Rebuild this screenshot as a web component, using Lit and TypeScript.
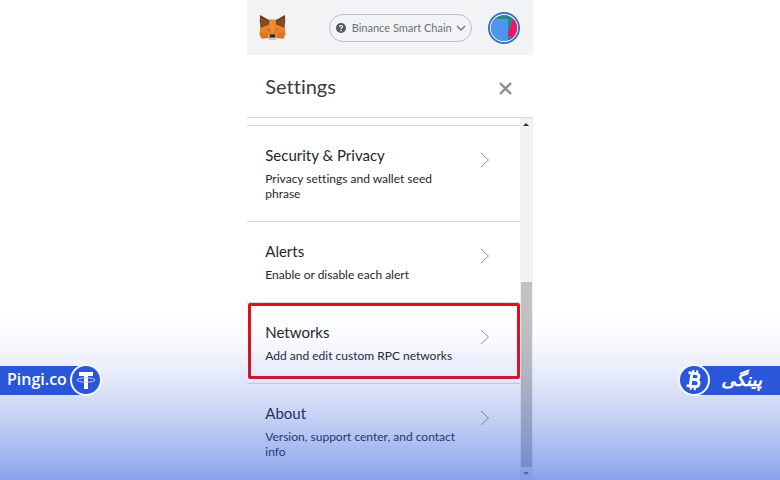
import { LitElement, html, css, svg } from "lit";
import { customElement } from "lit/decorators.js";
import { classMap } from "lit/directives/class-map.js";

interface Entry {
  title: string;
  text: string;
  marked?: boolean;
}

const entries: Entry[] = [
  { title: "Security & Privacy", text: "Privacy settings and wallet seed phrase" },
  { title: "Alerts", text: "Enable or disable each alert" },
  { title: "Networks", text: "Add and edit custom RPC networks", marked: true },
  { title: "About", text: "Version, support center, and contact info" },
];

const fox = svg`
  <path fill="#e5822a" d="M1 1 L9 5.500 H18 L26 1 V16 L26.500 20 L24.500 24.500 L18 24 L16 26 H11 L9 24 L2.500 24.500 L0.500 20 L1 16 Z"/>
  <path fill="#6b4024" d="M1 1 L10.500 6.500 L9.500 10.500 L2 13.500 L0.800 8 Z M26 1 L16.500 6.500 L17.500 10.500 L25 13.500 L26.200 8 Z"/>
  <path fill="#80502c" d="M2 4 L9 8 L6 11 L2 12 Z M25 4 L18 8 L21 11 L25 12 Z"/>
  <path fill="#ee8c34" d="M10.500 6.500 H16.500 L15.500 17 H11.500 Z"/>
  <path fill="#dc7424" d="M0.500 19 H8 L9 24 L2.500 24.500 Z M26.500 19 H19 L18 24 L24.500 24.500 Z"/>
  <path fill="#b9602c" d="M7.500 14.500 L11 15.500 L10.500 17.500 Z M19.500 14.500 L16 15.500 L16.500 17.500 Z"/>
  <path fill="#d8c6b8" d="M9.500 22 L11 21 H16 L17.500 22 V24 L16 26 H11 L9.500 24 Z"/>
  <path fill="#23252b" d="M11 20.500 H16 L16.500 23.500 H10.500 Z"/>`;

@customElement("app-root")
export class AppRoot extends LitElement {
  static styles = css`
    :host {
      display: block;
      position: relative;
      min-height: 100vh;
      background: #fff;
      color: #24272a;
      font-family: Lato, "Noto Sans", sans-serif;
      font-variant-ligatures: none;
    }
    * {
      box-sizing: border-box;
    }
    button {
      padding: 0;
      border: 0;
      background: none;
      color: inherit;
      font: inherit;
      text-align: left;
      cursor: pointer;
    }
    svg {
      display: block;
      flex: none;
    }
    h1, h2, p, ul {
      margin: 0;
      padding: 0;
      font-weight: 400;
    }
    .wallet {
      display: flex;
      flex-direction: column;
      width: 36.6%;
      min-height: 100vh;
      margin: 0 auto;
    }
    .bar {
      display: flex;
      align-items: center;
      height: 55px;
      padding: 0 13px 0 12px;
      background: #f2f3f4;
    }
    .network {
      position: relative;
      display: flex;
      align-items: center;
      margin: 0 16px 0 auto;
    }
    .network select {
      appearance: none;
      width: 143px;
      height: 28px;
      padding: 0 0 0 22px;
      border: 1px solid #bbc0c5;
      border-radius: 14px;
      background: none;
      color: #6a737d;
      font: 11px/16px Lato, sans-serif;
    }
    .help, .down {
      position: absolute;
      pointer-events: none;
    }
    .help {
      left: 7px;
    }
    .down {
      right: 6px;
    }
    .head {
      display: flex;
      align-items: center;
      justify-content: space-between;
      height: 63px;
      padding: 0 21px 0 18px;
      border-bottom: 1px solid #d6d9dc;
    }
    .head button {
      padding-top: 4px;
    }
    h1 {
      color: #3a3d42;
      font-size: 20px;
      line-height: 24px;
    }
    .body {
      flex: 1;
      display: flex;
    }
    ul {
      flex: 1;
      padding-top: 7px;
      list-style: none;
    }
    li {
      position: relative;
      border-top: 1px solid #d6d9dc;
    }
    .marked::after {
      content: "";
      position: absolute;
      inset: 0 0 4px 1px;
      border: 3px solid #df1119;
      border-radius: 2px;
      pointer-events: none;
    }
    .entry {
      display: flex;
      justify-content: space-between;
      width: 100%;
      padding: 17px 30px 20px 18px;
    }
    .words {
      display: flex;
      flex-direction: column;
      gap: 4px;
      max-width: 200px;
    }
    h2 {
      font-size: 15px;
      line-height: 24px;
    }
    p {
      font-size: 12px;
      line-height: 15px;
    }
    .next {
      margin-top: 9px;
    }
    .scroll {
      display: flex;
      flex-direction: column;
      align-items: center;
      width: 13px;
      background: #f1f1f1;
    }
    .scroll svg {
      margin: 5px 0;
    }
    .gap {
      flex: 151;
    }
    .thumb {
      flex: 186;
      width: 11px;
      background: #c1c1c1;
    }
    .shade {
      position: absolute;
      inset: auto 0 0;
      display: flex;
      align-items: flex-start;
      justify-content: space-between;
      height: 168px;
      padding-top: 52px;
      background: linear-gradient(
        rgba(40, 84, 214, 0) 0%,
        rgba(40, 84, 214, 0.03) 17%,
        rgba(40, 84, 214, 0.13) 40%,
        rgba(40, 84, 214, 0.3) 68%,
        rgba(40, 84, 214, 0.54) 100%
      );
      pointer-events: none;
    }
    .brand {
      display: flex;
      align-items: center;
      height: 32px;
      color: #fff;
      text-decoration: none;
      pointer-events: auto;
    }
    .name {
      height: 29px;
      background: #2a57d9;
      font: 600 16px/27px "Open Sans", "Noto Sans", sans-serif;
    }
    .latin {
      padding: 0 19px 0 7px;
      margin-right: -16px;
    }
    .persian {
      padding: 0 18px 0 27px;
      margin-left: -16px;
      font: italic 700 18px/27px "DejaVu Sans", sans-serif;
    }
    .coin {
      z-index: 1;
    }
  `;

  private entry(e: Entry) {
    return html`
      <li class=${classMap({ marked: !!e.marked })}>
        <button class="entry">
          <span class="words">
            <h2>${e.title}</h2>
            <p>${e.text}</p>
          </span>
          <svg class="next" width="10" height="16" viewBox="0 0 10 16" fill="none" stroke="#8f9296" aria-hidden="true">
            <path d="M1 1 L8.500 8 L1 15" />
          </svg>
        </button>
      </li>
    `;
  }

  render() {
    return html`
      <main class="wallet">
        <header class="bar">
          <svg width="27" height="27" viewBox="0 0 27 27" role="img" aria-label="MetaMask">${fox}</svg>
          <label class="network">
            <svg class="help" width="10" height="10" viewBox="0 0 10 10" aria-hidden="true">
              <circle cx="5" cy="5" r="5" fill="#535a61" />
              <path d="M3.500 3.900 Q3.600 2.500 5 2.500 Q6.500 2.500 6.500 3.800 Q6.500 4.600 5 5.300 V6" fill="none" stroke="#fff" stroke-width="1.200" />
              <circle cx="5" cy="7.600" r="0.800" fill="#fff" />
            </svg>
            <select aria-label="Network">
              <option>Binance Smart Chain</option>
            </select>
            <svg class="down" width="10" height="6" viewBox="0 0 10 6" fill="none" stroke="#6a737d" stroke-width="1.300" aria-hidden="true">
              <path d="M1 1 L5 5 L9 1" />
            </svg>
          </label>
          <button aria-label="Account">
            <svg width="32" height="32" viewBox="0 0 32 32">
              <defs><clipPath id="disc"><circle cx="16" cy="16" r="13" /></clipPath></defs>
              <circle cx="16" cy="16" r="15" fill="#fff" stroke="#3b6fcb" stroke-width="2" />
              <g clip-path="url(#disc)">
                <rect width="32" height="32" fill="#2b8486" />
                <path d="M0 7 H20 V32 H0 Z" fill="#4f94ee" />
                <path d="M25 7 L32 8 V32 L19.500 24 Z" fill="#fb0f66" />
                <path d="M20 24 L26 25 L20 32 Z" fill="#2b8486" />
              </g>
            </svg>
          </button>
        </header>
        <div class="head">
          <h1>Settings</h1>
          <button aria-label="Close">
            <svg width="13" height="13" viewBox="0 0 13 13" stroke="#8a8c8f" stroke-width="2.400">
              <path d="M1 1 L12 12 M12 1 L1 12" />
            </svg>
          </button>
        </div>
        <div class="body">
          <ul>${entries.map((e) => this.entry(e))}</ul>
          <div class="scroll" aria-hidden="true">
            <svg width="6" height="3" viewBox="0 0 6 3"><path d="M0 3 L3 0 L6 3 Z" fill="#333" /></svg>
            <div class="gap"></div>
            <div class="thumb"></div>
            <svg width="6" height="3" viewBox="0 0 6 3"><path d="M0 0 L3 3 L6 0 Z" fill="#777" /></svg>
          </div>
        </div>
      </main>
      <footer class="shade">
        <a class="brand" href="#pingi">
          <span class="name latin">Pingi.co</span>
          <svg class="coin" width="32" height="32" viewBox="0 0 32 32" aria-hidden="true">
            <circle cx="16" cy="16" r="15" fill="#2a57d9" stroke="#f4f6fd" stroke-width="2" />
            <path d="M9 8 H23 V12 H18 V25 H14 V12 H9 Z" fill="#fff" />
            <ellipse cx="16" cy="16" rx="9" ry="2.200" fill="none" stroke="#c3cef5" />
          </svg>
        </a>
        <a class="brand" href="#pingi-fa" lang="fa">
          <svg class="coin" width="32" height="32" viewBox="0 0 32 32" aria-hidden="true">
            <circle cx="16" cy="16" r="15" fill="#2a57d9" stroke="#f4f6fd" stroke-width="2" />
            <g fill="none" stroke="#fff" stroke-width="2.800" transform="rotate(8 16 16)">
              <path d="M9.500 9.500 H17 Q20.500 9.500 20.500 12.500 Q20.500 15.500 17 15.500 H13 M17 15.500 Q21.500 15.500 21.500 19 Q21.500 22.500 17 22.500 H9.500 M13 9.500 V22.500" />
              <path d="M14 6 V9 M18 6 V9 M14 22.500 V26 M18 22.500 V26" stroke-width="2" />
            </g>
          </svg>
          <span class="name persian" dir="rtl">پینگی</span>
        </a>
      </footer>
    `;
  }
}
